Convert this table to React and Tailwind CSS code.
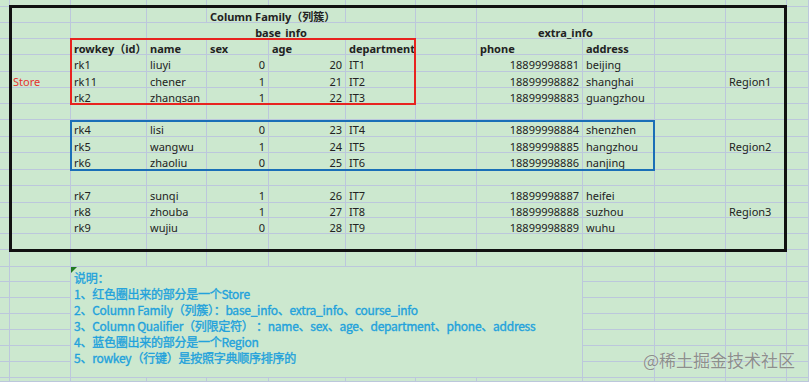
import React from "react";

// row heights (px) and column widths live in the grid template classes below
const ROW_COUNT = 25;
const COL_COUNT = 13;

const data = [
  { row: 4, rk: "rk1", name: "liuyi", sex: 0, age: 20, dept: "IT1", phone: "18899998881", addr: "beijing" },
  { row: 5, rk: "rk11", name: "chener", sex: 1, age: 21, dept: "IT2", phone: "18899998882", addr: "shanghai" },
  { row: 6, rk: "rk2", name: "zhangsan", sex: 1, age: 22, dept: "IT3", phone: "18899998883", addr: "guangzhou" },
  { row: 8, rk: "rk4", name: "lisi", sex: 0, age: 23, dept: "IT4", phone: "18899998884", addr: "shenzhen" },
  { row: 9, rk: "rk5", name: "wangwu", sex: 1, age: 24, dept: "IT5", phone: "18899998885", addr: "hangzhou" },
  { row: 10, rk: "rk6", name: "zhaoliu", sex: 0, age: 25, dept: "IT6", phone: "18899998886", addr: "nanjing" },
  { row: 12, rk: "rk7", name: "sunqi", sex: 1, age: 26, dept: "IT7", phone: "18899998887", addr: "heifei" },
  { row: 13, rk: "rk8", name: "zhouba", sex: 1, age: 27, dept: "IT8", phone: "18899998888", addr: "suzhou" },
  { row: 14, rk: "rk9", name: "wujiu", sex: 0, age: 28, dept: "IT9", phone: "18899998889", addr: "wuhu" },
];

const notes = [
  "说明：",
  "1、红色圈出来的部分是一个Store",
  "2、Column Family（列簇）：base_info、extra_info、course_info",
  "3、Column Qualifier（列限定符） ：name、sex、age、department、phone、address",
  "4、蓝色圈出来的部分是一个Region",
  "5、rowkey（行键）是按照字典顺序排序的",
];

// build a map of "row-col" -> cell description
function buildCells() {
  const cells = {};
  const put = (r, c, cell) => (cells[`${r}-${c}`] = cell);

  put(1, 4, { text: "Column Family（列簇）", bold: true, span: "col-span-2", w: 2 });
  put(2, 3, { text: "base_info", bold: true, align: "center", span: "col-span-4", w: 4 });
  put(2, 8, { text: "extra_info", bold: true, align: "center", span: "col-span-2", w: 2 });

  const headers = { 2: "rowkey（id）", 3: "name", 4: "sex", 5: "age", 6: "department", 8: "phone", 9: "address" };
  Object.entries(headers).forEach(([c, t]) => put(3, Number(c), { text: t, bold: true }));

  data.forEach((d) => {
    put(d.row, 2, { text: d.rk });
    put(d.row, 3, { text: d.name });
    put(d.row, 4, { text: d.sex, align: "right" });
    put(d.row, 5, { text: d.age, align: "right" });
    put(d.row, 6, { text: d.dept });
    put(d.row, 8, { text: d.phone, align: "right" });
    put(d.row, 9, { text: d.addr });
  });

  put(5, 1, { text: "Store", red: true });
  put(5, 11, { text: "Region1" });
  put(9, 11, { text: "Region2" });
  put(13, 11, { text: "Region3" });

  put(17, 2, { notes: true, w: 7, h: 7 });
  return cells;
}

function Cell({ cell }) {
  if (cell?.notes) {
    return (
      <div className="col-span-7 row-span-7 relative border-r border-b border-[#bcc7dc] pl-[3px] pt-[3px] font-['Noto_Sans_CJK_SC',sans-serif]">
        <div className="absolute left-0 top-0 w-0 h-0 border-t-[6px] border-r-[6px] border-t-[#1f7a1f] border-r-transparent" />
        {notes.map((n) => (
          <div
            key={n}
            className="h-4 leading-4 text-[12px] tracking-[-0.25px] text-[#22a2dc] [-webkit-text-stroke:0.35px_#22a2dc] whitespace-nowrap"
          >
            {n}
          </div>
        ))}
      </div>
    );
  }
  const align =
    cell?.align === "right" ? "justify-end pr-[3px]" : cell?.align === "center" ? "justify-center" : "justify-start pl-[3px]";
  return (
    <div
      className={`${cell?.span ?? ""} flex items-center pt-[3px] ${align} border-r border-b border-[#bcc7dc] overflow-visible whitespace-nowrap text-[11px] leading-none ${
        cell?.bold ? "font-bold" : ""
      } ${cell?.red ? "text-[#e5332d]" : "text-[#222]"}`}
    >
      {cell?.text}
    </div>
  );
}

export default function App() {
  const cells = buildCells();
  const covered = new Set();
  Object.entries(cells).forEach(([key, c]) => {
    const [r, col] = key.split("-").map(Number);
    for (let i = 0; i < (c.h ?? 1); i++)
      for (let j = 0; j < (c.w ?? 1); j++) if (i || j) covered.add(`${r + i}-${col + j}`);
  });

  const out = [];
  for (let r = 0; r < ROW_COUNT; r++) {
    for (let c = 0; c < COL_COUNT; c++) {
      const key = `${r}-${c}`;
      if (covered.has(key)) continue;
      out.push(<Cell key={key} cell={cells[key]} />);
    }
  }

  return (
    <div className="relative w-[809px] h-[382px] overflow-hidden bg-[#cce8cf] font-['Noto_Sans','Noto_Sans_CJK_SC',sans-serif]">
      <div className="grid grid-cols-[10px_61px_76px_60px_62px_77px_70px_61px_106px_72px_71px_61px_22px] grid-rows-[7px_16px_16px_16px_17px_16px_16px_16px_17px_16px_17px_16px_17px_15px_16px_16px_17px_15px_16px_16px_16px_16px_16px_16px_4px]">
        {out}
      </div>

      {/* outlines drawn over the sheet */}
      <div className="absolute left-[9px] top-[5px] w-[778px] h-[247px] border-[3px] border-[#111]" />
      <div className="absolute left-[70px] top-[38px] w-[346px] h-[67px] border-2 border-[#e8231f]" />
      <div className="absolute left-[70px] top-[120px] w-[585px] h-[51px] border-2 border-[#1a6fb7]" />

      <div className="absolute left-[643px] top-[349px] text-[17px] leading-[22px] text-[#8c8f8c] font-['Noto_Sans_CJK_SC',sans-serif] [text-shadow:0_0_1px_#eef5ee]">
        @稀土掘金技术社区
      </div>
    </div>
  );
}
